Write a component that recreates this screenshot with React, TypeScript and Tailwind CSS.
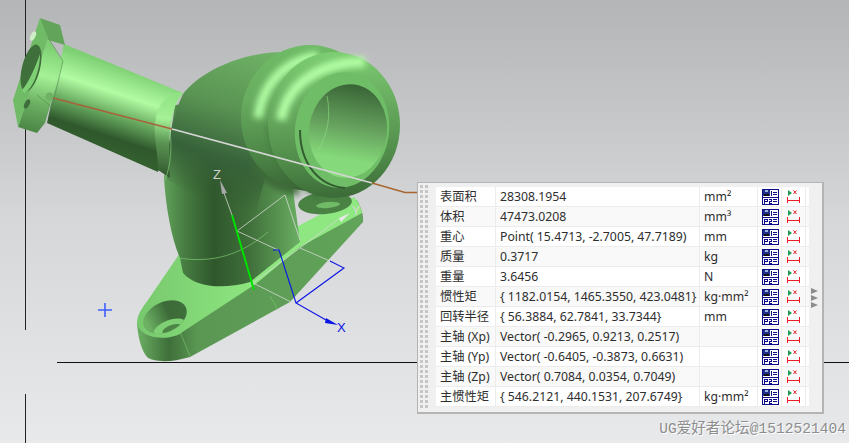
const rows = [
  { label: '表面积', value: '28308.1954', unit: 'mm²' },
  { label: '体积', value: '47473.0208', unit: 'mm³' },
  { label: '重心', value: 'Point( 15.4713, -2.7005, 47.7189)', unit: 'mm' },
  { label: '质量', value: '0.3717', unit: 'kg' },
  { label: '重量', value: '3.6456', unit: 'N' },
  { label: '惯性矩', value: '{ 1182.0154, 1465.3550, 423.0481}', unit: 'kg·mm²' },
  { label: '回转半径', value: '{ 56.3884, 62.7841, 33.7344}', unit: 'mm' },
  { label: '主轴 (Xp)', value: 'Vector( -0.2965, 0.9213, 0.2517)', unit: '' },
  { label: '主轴 (Yp)', value: 'Vector( -0.6405, -0.3873, 0.6631)', unit: '' },
  { label: '主轴 (Zp)', value: 'Vector( 0.7084, 0.0354, 0.7049)', unit: '' },
  { label: '主惯性矩', value: '{ 546.2121, 440.1531, 207.6749}', unit: 'kg·mm²' },
];

function SaveIcon() {
  return (
    <svg width="17" height="16" viewBox="0 0 17 16" shapeRendering="crispEdges">
      <rect x="0.5" y="0.5" width="16" height="15" fill="#fff" stroke="#0c0c8a" />
      <rect x="1" y="1" width="7" height="6" fill="#1f2f86" />
      <rect x="3" y="1" width="3" height="2" fill="#9db4e0" />
      <rect x="2" y="5" width="5" height="2" fill="#111" />
      <rect x="9" y="2" width="1" height="5" fill="#0c0c8a" />
      <rect x="11" y="3" width="4" height="1" fill="#0c0c8a" />
      <rect x="11" y="5" width="4" height="1" fill="#0c0c8a" />
      <rect x="1" y="8" width="15" height="1" fill="#0c0c8a" />
      <path d="M2.5 15V10H5.5V12.5H2.5M7 10.5H9.5V12H7V14.5H9.5" fill="none" stroke="#0c0c8a" />
      <rect x="11" y="10" width="4" height="1" fill="#0c0c8a" />
      <rect x="11" y="12" width="4" height="1" fill="#0c0c8a" />
    </svg>
  );
}

function MeasureIcon() {
  return (
    <svg width="15" height="15" viewBox="0 0 15 15">
      <path d="M2 1V7L6 4Z" fill="#1f9d55" />
      <path d="M7.5 1.5L10.5 5M10.5 1.5L7.5 5" stroke="#e0202a" strokeWidth="1" fill="none" />
      <path d="M1.5 8V14M13.5 8V14M1.5 11.5H13.5" stroke="#ee1c25" strokeWidth="1" fill="none" shapeRendering="crispEdges" />
    </svg>
  );
}

function Model() {
  return (
    <svg className="absolute inset-0" width="849" height="443" viewBox="0 0 849 443">
      <defs>
        <filter id="soft" x="-30%" y="-30%" width="160%" height="160%">
          <feGaussianBlur stdDeviation="3" />
        </filter>
        <linearGradient id="pipe" gradientUnits="userSpaceOnUse" x1="105" y1="62" x2="78" y2="145">
          <stop offset="0" stop-color="#7fd074" />
          <stop offset="0.3" stop-color="#b2fca3" />
          <stop offset="0.55" stop-color="#68aa60" />
          <stop offset="0.8" stop-color="#2f582c" />
          <stop offset="1" stop-color="#34602f" />
        </linearGradient>
        <linearGradient id="collar" gradientUnits="userSpaceOnUse" x1="172" y1="95" x2="160" y2="175">
          <stop offset="0" stop-color="#8fe383" />
          <stop offset="0.3" stop-color="#a5f296" />
          <stop offset="0.6" stop-color="#5a9453" />
          <stop offset="1" stop-color="#33592f" />
        </linearGradient>
        <linearGradient id="column" gradientUnits="userSpaceOnUse" x1="165" y1="0" x2="305" y2="0">
          <stop offset="0" stop-color="#5f9f58" />
          <stop offset="0.15" stop-color="#457a40" />
          <stop offset="0.35" stop-color="#2f572c" />
          <stop offset="0.6" stop-color="#3f6f3a" />
          <stop offset="0.85" stop-color="#5c9a55" />
          <stop offset="1" stop-color="#70b768" />
        </linearGradient>
        <linearGradient id="sphere" gradientUnits="userSpaceOnUse" x1="270" y1="52" x2="222" y2="205">
          <stop offset="0" stop-color="#6fb266" />
          <stop offset="0.4" stop-color="#5a9453" />
          <stop offset="0.72" stop-color="#37623a" />
          <stop offset="1" stop-color="#33592f" stop-opacity="0" />
        </linearGradient>
        <linearGradient id="ringA" gradientUnits="userSpaceOnUse" x1="290" y1="45" x2="300" y2="190">
          <stop offset="0" stop-color="#6fbb66" />
          <stop offset="0.35" stop-color="#68ad60" />
          <stop offset="0.7" stop-color="#4f8a49" />
          <stop offset="1" stop-color="#3a6636" />
        </linearGradient>
        <linearGradient id="ringB" gradientUnits="userSpaceOnUse" x1="325" y1="52" x2="335" y2="197">
          <stop offset="0" stop-color="#7ccd72" />
          <stop offset="0.4" stop-color="#66a95e" />
          <stop offset="0.75" stop-color="#4f8a49" />
          <stop offset="1" stop-color="#3c6c38" />
        </linearGradient>
        <linearGradient id="hole" gradientUnits="userSpaceOnUse" x1="348" y1="85" x2="345" y2="178">
          <stop offset="0" stop-color="#3a6637" />
          <stop offset="0.45" stop-color="#66a25e" />
          <stop offset="0.8" stop-color="#85d97a" />
          <stop offset="1" stop-color="#86da7b" />
        </linearGradient>
        <linearGradient id="baseSide" gradientUnits="userSpaceOnUse" x1="140" y1="0" x2="360" y2="0">
          <stop offset="0" stop-color="#68aa60" />
          <stop offset="0.13" stop-color="#3f6f3a" />
          <stop offset="0.26" stop-color="#5a9753" />
          <stop offset="1" stop-color="#62a45a" />
        </linearGradient>
        <linearGradient id="baseTop" gradientUnits="userSpaceOnUse" x1="140" y1="0" x2="360" y2="0">
          <stop offset="0" stop-color="#78c96e" />
          <stop offset="0.5" stop-color="#8de57f" />
          <stop offset="1" stop-color="#90e882" />
        </linearGradient>
        <linearGradient id="baseHole" gradientUnits="userSpaceOnUse" x1="146" y1="0" x2="186" y2="0">
          <stop offset="0" stop-color="#6cb063" />
          <stop offset="0.6" stop-color="#3c6a38" />
          <stop offset="1" stop-color="#3f6f3a" />
        </linearGradient>
        <clipPath id="baseHoleClip">
          <ellipse cx="165" cy="317" rx="23" ry="15" transform="rotate(-25 165 317)" />
        </clipPath>
        <linearGradient id="flangeBlock" gradientUnits="userSpaceOnUse" x1="60" y1="50" x2="40" y2="130">
          <stop offset="0" stop-color="#7fd074" />
          <stop offset="0.35" stop-color="#a5f296" />
          <stop offset="0.7" stop-color="#6cb063" />
          <stop offset="1" stop-color="#4f8a49" />
        </linearGradient>
      </defs>

      {/* view triad lines */}
      <path d="M25.5 0V330M25.5 394V443" stroke="#222" strokeWidth="1" />
      <path d="M57 362.5H417M823 362.5H849" stroke="#111" strokeWidth="1" />
      <path d="M98 310H112M105 303V317" stroke="#3f5fff" strokeWidth="1.6" />

      {/* base flange */}
      <path d="M137 323C138 337 141 350 147 357C153 362 170 363 190 357L290 302L363 222C364 214 360 206 357 200Z" fill="url(#baseSide)" />
      <path d="M137 323C137 315 142 308 148 300L180 253L240 270L300 225L354 197C357 200 361 207 362 213L300 247L257 283L184 331C172 342 140 340 137 323Z" fill="url(#baseTop)" />
      <ellipse cx="165" cy="317" rx="23" ry="15" transform="rotate(-25 165 317)" fill="url(#baseHole)" />
      <g clipPath="url(#baseHoleClip)">
        <ellipse cx="170" cy="328" rx="17" ry="8" transform="rotate(-20 170 328)" fill="#7fd074" />
        <ellipse cx="172" cy="329" rx="10" ry="4" transform="rotate(-20 172 329)" fill="#4d8547" />
      </g>
      <path d="M180 332L190 356M270 296L278 310" stroke="#7cc771" strokeWidth="0.6" fill="none" />
      <ellipse cx="325" cy="203" rx="27" ry="11" transform="rotate(-5 325 203)" fill="#4a8244" />
      <ellipse cx="328" cy="205" rx="12" ry="3" transform="rotate(-5 328 205)" fill="#6fbb66" />

      {/* column and elbow */}
      <path d="M164 178C166 210 172 240 180 258L183 273C195 287 222 290 250 282L300 242L293 190L280 150L230 100L175 105Z" fill="url(#column)" />
      <path d="M178 258C205 262 235 260 268 232" fill="none" stroke="#7cc771" strokeWidth="0.7" />
      <path d="M183 94C200 72 240 52 285 52L300 80L265 178L255 215C225 215 190 195 166 178C168 150 170 120 183 94Z" fill="url(#sphere)" />
      <path d="M250 165C262 185 280 195 300 195L285 150Z" fill="#3c6a38" filter="url(#soft)" />

      {/* pipe */}
      <path d="M64 44L183 93C172 105 168 125 167 140L158 172L47 123Z" fill="url(#pipe)" />
      <path d="M156 118C160 100 170 93 183 93C172 105 167 130 170 178L158 170C158 150 152 130 156 118Z" fill="url(#collar)" />
      <path d="M155 118C160 100 170 93 183 93" fill="none" stroke="#9ae58d" strokeWidth="0.6" />
      <path d="M170 131C172 145 171 165 165 180" fill="none" stroke="#8ddc80" strokeWidth="0.6" />

      {/* left flange */}
      <path d="M40 18L60 25L65 45L48 40Z" fill="#62a55a" />
      <path d="M48 38L63 62L45 123L37 133L18 127Z" fill="url(#flangeBlock)" />
      <path d="M48 38L63 61L52 107L37 95" fill="none" stroke="#4f8a49" strokeWidth="0.6" />
      <path d="M40 18L48 38L32 86L18 127L13 100Z" fill="#6fbb66" />
      <ellipse cx="31" cy="68" rx="9" ry="24" transform="rotate(14 31 68)" fill="#3f6f3a" />
      <path d="M22 90C28 84 36 66 40 54C40 72 32 90 24 93Z" fill="#7fd074" />
      <ellipse cx="33" cy="36" rx="2.5" ry="5" transform="rotate(25 33 36)" fill="#cfeec8" />
      <ellipse cx="27" cy="104" rx="2.5" ry="5" transform="rotate(25 27 104)" fill="#3f6f3a" />
      <circle cx="49.5" cy="96.5" r="4" fill="#6fb266" />

      {/* head rings */}
      <ellipse cx="310" cy="118" rx="69" ry="73" fill="url(#ringA)" />
      <path d="M258 118C262 85 285 60 318 56" fill="none" stroke="#b4ffa6" strokeWidth="9" filter="url(#soft)" />
      <path d="M270 125C272 150 290 185 320 195" fill="none" stroke="#2f582c" strokeWidth="3" filter="url(#soft)" />
      <ellipse cx="334" cy="125" rx="66" ry="73" fill="url(#ringB)" />
      <path d="M281 120C286 88 315 62 365 62" fill="none" stroke="#b4ffa6" strokeWidth="10" filter="url(#soft)" />
      <ellipse cx="342" cy="130" rx="47" ry="58" transform="rotate(8 342 130)" fill="#6fbd66" />
      <path d="M300 130C300 165 320 186 345 188" fill="none" stroke="#335c30" strokeWidth="2" />
      <ellipse cx="348" cy="131" rx="39" ry="47" transform="rotate(8 348 131)" fill="url(#hole)" />
      <path d="M327 96C331 115 328 135 318 150" fill="none" stroke="#8edf82" strokeWidth="0.6" />

      {/* measure leader */}
      <path d="M53 98L172 129" stroke="#a8623a" strokeWidth="1.6" />
      <path d="M172 129L372 183" stroke="#d6d6d6" strokeWidth="1.6" />
      <path d="M372 183L405 192.5H418" fill="none" stroke="#a8662f" strokeWidth="1.6" />

      {/* csys */}
      <path d="M224 193L232 215M237 231L285 195L300 240M237 231L278 250M300 248L330 261M253 283L340 218M253 283L293 303" fill="none" stroke="#d4d8d2" strokeWidth="0.8" />
      <path d="M232 215L254 290" stroke="#00e000" strokeWidth="2" />
      <path d="M220 180L227 193L222 194Z" fill="#a8a8a8" />
      <path d="M350 213L339 218L341 222Z" fill="#e8e8e8" />
      <path d="M273 250L279 250L296 303M330 261L344 268L296 303L326 320" fill="none" stroke="#0a14e6" strokeWidth="1.1" />
      <path d="M338 325L326 318L325 323Z" fill="#0a14e6" />
      <text x="213" y="179" fontFamily="Liberation Sans, sans-serif" fontSize="13" fill="#d0d0d0">Z</text>
      <text x="352" y="215" fontFamily="Liberation Sans, sans-serif" fontSize="12" fill="#d8d8d8">Y</text>
      <text x="337" y="332" fontFamily="Liberation Sans, sans-serif" fontSize="13" fill="#0a14e6">X</text>
    </svg>
  );
}

function PropertyPanel() {
  return (
    <div className="absolute left-[417px] top-[182px] flex h-[232px] w-[407px] border border-[#b4b4b4] border-b-2 border-r-2 bg-[#f0f0f0]">
      <div className="ml-[2px] mt-[2px] grid h-[225px] w-[8px] grid-cols-[3px_3px] content-start gap-x-[2px] gap-y-[2px]">
        {Array.from({ length: 90 }).map((_, i) => (
          <span key={i} className="h-[3px] w-[3px] bg-[#c6c6c6]" />
        ))}
      </div>
      <div className="ml-[8px] mt-[4px] w-[373px] self-start bg-white">
        {rows.map((row, i) => (
          <div
            key={row.label}
            className={`flex h-[20px] items-center border-b border-[#ececec] text-[12.25px] text-[#2e2e2e] ${i % 2 === 1 ? 'bg-[#f9f9f9]' : 'bg-white'}`}
          >
            <span className="h-full w-[60px] border-r border-[#ececec] pl-[4px] leading-[20px] whitespace-nowrap">{row.label}</span>
            <span className="h-full w-[204px] border-r border-[#ececec] pl-[4px] leading-[20px] whitespace-nowrap">{row.value}</span>
            <span className="h-full w-[58px] border-r border-[#ececec] pl-[4px] leading-[20px]">{row.unit}</span>
            <span className="flex h-full w-[24px] items-center justify-center border-r border-[#ececec] pl-[2px]">
              <SaveIcon />
            </span>
            <span className="flex h-full w-[24px] items-center justify-center border-r border-[#ececec]">
              <MeasureIcon />
            </span>
          </div>
        ))}
      </div>
      <div className="ml-[2px] mt-[105px] flex flex-col gap-[1px] self-start">
        <span className="h-0 w-0 border-y-[3px] border-l-[7px] border-y-transparent border-l-[#8c8c8c]" />
        <span className="h-0 w-0 border-y-[3px] border-l-[7px] border-y-transparent border-l-[#8c8c8c]" />
        <span className="h-0 w-0 border-y-[3px] border-l-[7px] border-y-transparent border-l-[#8c8c8c]" />
      </div>
    </div>
  );
}

export default function App() {
  return (
    <div className="relative h-[443px] w-[849px] overflow-hidden bg-gradient-to-b from-[#b4b5b7] via-[#d6d7d9] to-[#e8e9eb] font-['Noto_Sans','Noto_Sans_CJK_SC',sans-serif]">
      <Model />
      <PropertyPanel />
      <div className="absolute right-[3px] top-[420px] whitespace-nowrap font-['Liberation_Mono','Noto_Sans_CJK_SC',monospace] text-[14.6px] leading-[18px] text-[#8d8d8d] [text-shadow:1px_1px_0_#ffffff]">
        UG爱好者论坛@1512521404
      </div>
    </div>
  );
}
